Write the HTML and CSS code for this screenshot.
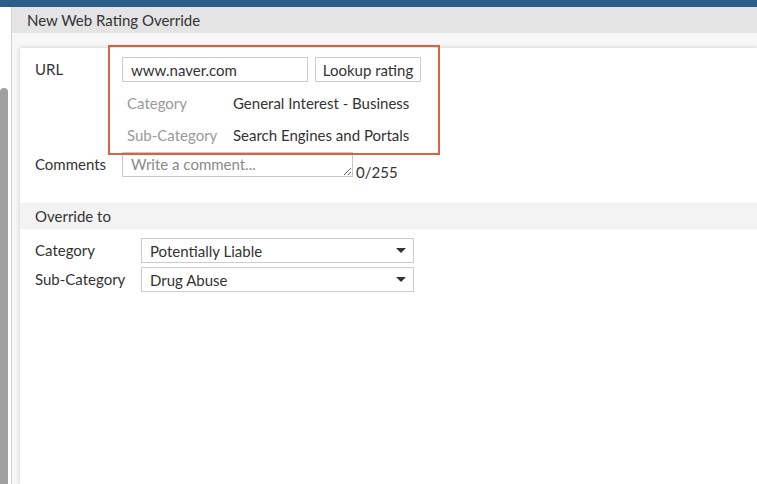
FILE: index.html
```html
<!DOCTYPE html>
<html>
<head>
<meta charset="utf-8">
<link rel="stylesheet" href="styles.css">
</head>
<body>
<div class="topbar"></div>
<div class="layout">
  <div class="sidebar"><div class="thumb"></div></div>
  <div class="main">
    <div class="title">New Web Rating Override</div>
    <div class="stage">
      <div class="panel">
        <div class="url-section">
          <div class="lbl url-lbl">URL</div>
          <div class="lookup">
            <div class="lookup-row">
              <input class="text-input" type="text" value="www.naver.com">
              <button class="btn">Lookup rating</button>
            </div>
            <div class="details">
              <div class="muted">Category</div><div>General Interest - Business</div>
              <div class="muted">Sub-Category</div><div>Search Engines and Portals</div>
            </div>
          </div>
          <div class="lbl comments-lbl">Comments</div>
          <div class="comments">
            <textarea class="comment-box" placeholder="Write a comment..."></textarea>
            <span class="counter">0/255</span>
          </div>
        </div>
        <div class="band">Override to</div>
        <div class="override">
          <div class="lbl">Category</div>
          <div class="select"><span>Potentially Liable</span><i class="caret"></i></div>
          <div class="lbl">Sub-Category</div>
          <div class="select"><span>Drug Abuse</span><i class="caret"></i></div>
        </div>
        <div class="highlight"></div>
      </div>
    </div>
  </div>
</div>
</body>
</html>
```

FILE: styles.css
```css
* { box-sizing: border-box; }
html, body { margin: 0; padding: 0; height: 100%; overflow: hidden; }
body {
  font-family: Lato, "Noto Sans", sans-serif;
  font-size: 15px;
  color: #333;
  background: #fff;
  display: flex;
  flex-direction: column;
}
.topbar { height: 7px; background: #2a5f8b; flex: none; }
.layout { flex: 1; display: flex; min-height: 0; }
.sidebar {
  width: 12px;
  flex: none;
  background: #fff;
  border-right: 1px solid #d4d4d4;
  padding-top: 81px;
}
.thumb {
  width: 8px;
  height: 100%;
  background: #a0a0a0;
  border-radius: 4px 4px 0 0;
}
.main { flex: 1; display: flex; flex-direction: column; min-width: 0; }
.title {
  height: 26px;
  line-height: 27px;
  background: #e4e4e4;
  padding-left: 15px;
  flex: none;
}
.stage {
  flex: 1;
  background: #f7f7f7;
  padding: 15px 0 0 8px;
  display: flex;
}
.panel {
  flex: 1;
  background: #fff;
  box-shadow: 0 0 5px rgba(0,0,0,0.18);
  position: relative;
  padding-top: 9px;
}
.url-section {
  display: grid;
  grid-template-columns: 87px auto;
  padding-left: 15px;
  align-items: start;
}
.lbl { line-height: 25px; }
.lookup-row { display: flex; gap: 7px; }
.text-input {
  width: 186px;
  height: 25px;
  border: 1px solid #ccc;
  font: inherit;
  color: #333;
  padding: 0 8px;
  margin: 0;
  outline: none;
}
.btn {
  width: 106px;
  height: 25px;
  border: 1px solid #ccc;
  background: #fff;
  font: inherit;
  color: #333;
  padding: 0;
  margin: 0;
}
.details {
  display: grid;
  grid-template-columns: 106px auto;
  grid-auto-rows: 32px;
  align-items: center;
  margin-top: 5px;
  padding-left: 5px;
}
.muted { color: #9a9a9a; }
.comments-lbl { margin-top: 1px; line-height: 24px; }
.comments { display: flex; align-items: flex-end; margin-top: 1px; }
.comment-box {
  width: 231px;
  height: 25px;
  border: 1px solid #c8c8c8;
  font: inherit;
  color: #333;
  padding: 2px 8px;
  margin: 0;
  display: block;
  outline: none;
  overflow: hidden;
}
.comment-box::placeholder { color: #8a8a8a; }
.counter { margin-left: 3px; line-height: 16px; margin-bottom: -3px; }
.band {
  margin-top: 26px;
  height: 26px;
  line-height: 26px;
  background: #f3f3f3;
  padding-left: 15px;
}
.override {
  display: grid;
  grid-template-columns: 106px 273px;
  grid-auto-rows: 25px;
  row-gap: 4px;
  margin-top: 9px;
  padding-left: 15px;
  align-items: center;
}
.select {
  height: 25px;
  border: 1px solid #ccc;
  display: flex;
  align-items: center;
  justify-content: space-between;
  padding: 0 7px 0 8px;
}
.caret {
  width: 0;
  height: 0;
  border-left: 5px solid transparent;
  border-right: 5px solid transparent;
  border-top: 5px solid #333;
}
.highlight {
  position: absolute;
  left: 88px;
  top: -3px;
  width: 332px;
  height: 110px;
  border: 2px solid #d9623f;
  pointer-events: none;
}
```
